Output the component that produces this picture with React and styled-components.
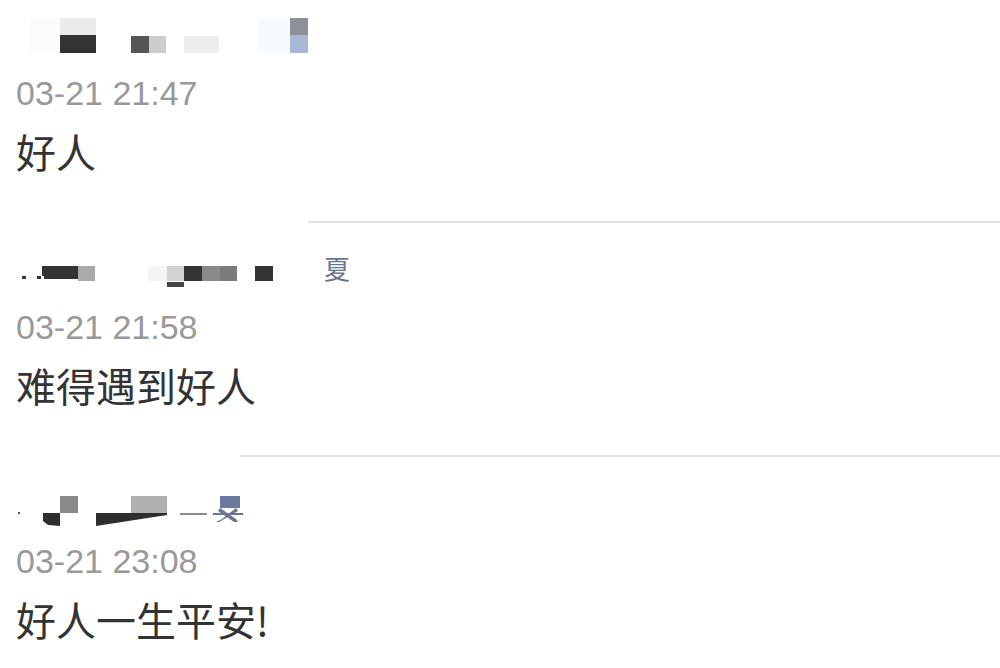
import styled, { createGlobalStyle } from "styled-components";

const GlobalStyle = createGlobalStyle`
  html, body {
    margin: 0;
    padding: 0;
    background: #fff;
  }
  body {
    font-family: "Liberation Sans", "Noto Sans CJK SC", sans-serif;
  }
`;

const Page = styled.div`
  width: 1000px;
  height: 668px;
  overflow: hidden;
  background: #fff;
`;

const Item = styled.div`
  padding-top: ${(p) => (p.first ? "11px" : "22px")};
  padding-bottom: 42px;
`;

const NameRow = styled.svg`
  display: block;
  width: 360px;
  height: 50px;
  overflow: visible;
`;

const Body = styled.div`
  padding-left: 16px;
`;

const Time = styled.div`
  margin-top: 12px;
  font-family: "Liberation Sans", Arial, sans-serif;
  font-size: 34px;
  line-height: 40px;
  color: #999;
`;

const Content = styled.div`
  margin-top: 10px;
  font-family: "Noto Sans CJK SC", "Liberation Sans", sans-serif;
  font-size: 40px;
  line-height: 56px;
  color: #333;
`;

const Divider = styled.div`
  height: 2px;
  margin-left: ${(p) => p.inset}px;
  background: #e2e2e2;
`;

// pixelated (censored) nicknames
const names = [
  {
    blocks: [
      [30, 1, 30, 35, "#fbfbfb"],
      [60, 1, 36, 17, "#ebebeb"],
      [60, 18, 36, 18, "#333"],
      [131, 19, 18, 17, "#555"],
      [149, 19, 17, 17, "#cdcdcd"],
      [184, 19, 35, 17, "#ededed"],
      [258, 1, 32, 35, "#f6fbff"],
      [290, 1, 18, 17, "#8d909b"],
      [290, 18, 18, 18, "#a9b7d6"],
    ],
    shapes: [],
  },
  {
    blocks: [
      [22, 25, 4, 3, "#333"],
      [37, 25, 4, 3, "#333"],
      [42, 15, 36, 10, "#333"],
      [78, 15, 17, 15, "#aaa"],
      [148, 15, 19, 15, "#f4f4f4"],
      [167, 15, 17, 15, "#d2d2d2"],
      [184, 15, 18, 15, "#333"],
      [202, 15, 18, 15, "#8a8a8a"],
      [220, 15, 17, 15, "#7b7b7b"],
      [167, 31, 17, 5, "#444"],
      [255, 15, 18, 15, "#333"],
    ],
    shapes: [
      ["M44 25 L50 22 L56 25 L62 22 L70 25 L78 25 L78 28 L44 28 Z", "#333"],
    ],
    glyph: { x: 324, y: 28, ch: "夏" },
  },
  {
    blocks: [
      [18, 27, 2, 2, "#555"],
      [60, 11, 18, 17, "#8a8a8a"],
      [131, 11, 36, 17, "#b0b0b0"],
      [180, 28, 27, 2, "#8a8a8a"],
      [220, 11, 20, 12, "#6a78a0"],
    ],
    shapes: [
      ["M43 28 L60 28 L60 41 L48 40 L43 36 Z", "#2e2e2e"],
      ["M96 28 L167 28 L167 30 L96 41 Z", "#2e2e2e"],
      ["M213 28 L243 28 L243 30 L213 30 Z", "#6a7590"],
      ["M220 23 L236 34 L238 37 L234 37 L218 26 Z", "#6a7590"],
      ["M236 23 L222 34 L216 37 L219 37 L238 26 Z", "#6a7590"],
    ],
  },
];

const Nickname = ({ data }) => (
  <NameRow viewBox="0 -6 360 50">
    {data.blocks.map(([x, y, w, h, c], i) => (
      <rect key={i} x={x} y={y} width={w} height={h} fill={c} />
    ))}
    {data.shapes.map(([d, c], i) => (
      <path key={i} d={d} fill={c} />
    ))}
    {data.glyph && (
      <text
        x={data.glyph.x}
        y={data.glyph.y}
        fontSize="26"
        fill="#6b7590"
        fontFamily="Noto Sans CJK SC, sans-serif"
      >
        {data.glyph.ch}
      </text>
    )}
  </NameRow>
);

const comments = [
  { time: "03-21 21:47", text: "好人", inset: 308 },
  { time: "03-21 21:58", text: "难得遇到好人", inset: 240 },
  { time: "03-21 23:08", text: "好人一生平安!" },
];

const App = () => {
  return (
    <Page>
      <GlobalStyle />
      {comments.map((c, i) => (
        <div key={i}>
          <Item first={i === 0}>
            <Nickname data={names[i]} />
            <Body>
              <Time>{c.time}</Time>
              <Content>{c.text}</Content>
            </Body>
          </Item>
          {c.inset && <Divider inset={c.inset} />}
        </div>
      ))}
    </Page>
  );
};

export default App;
